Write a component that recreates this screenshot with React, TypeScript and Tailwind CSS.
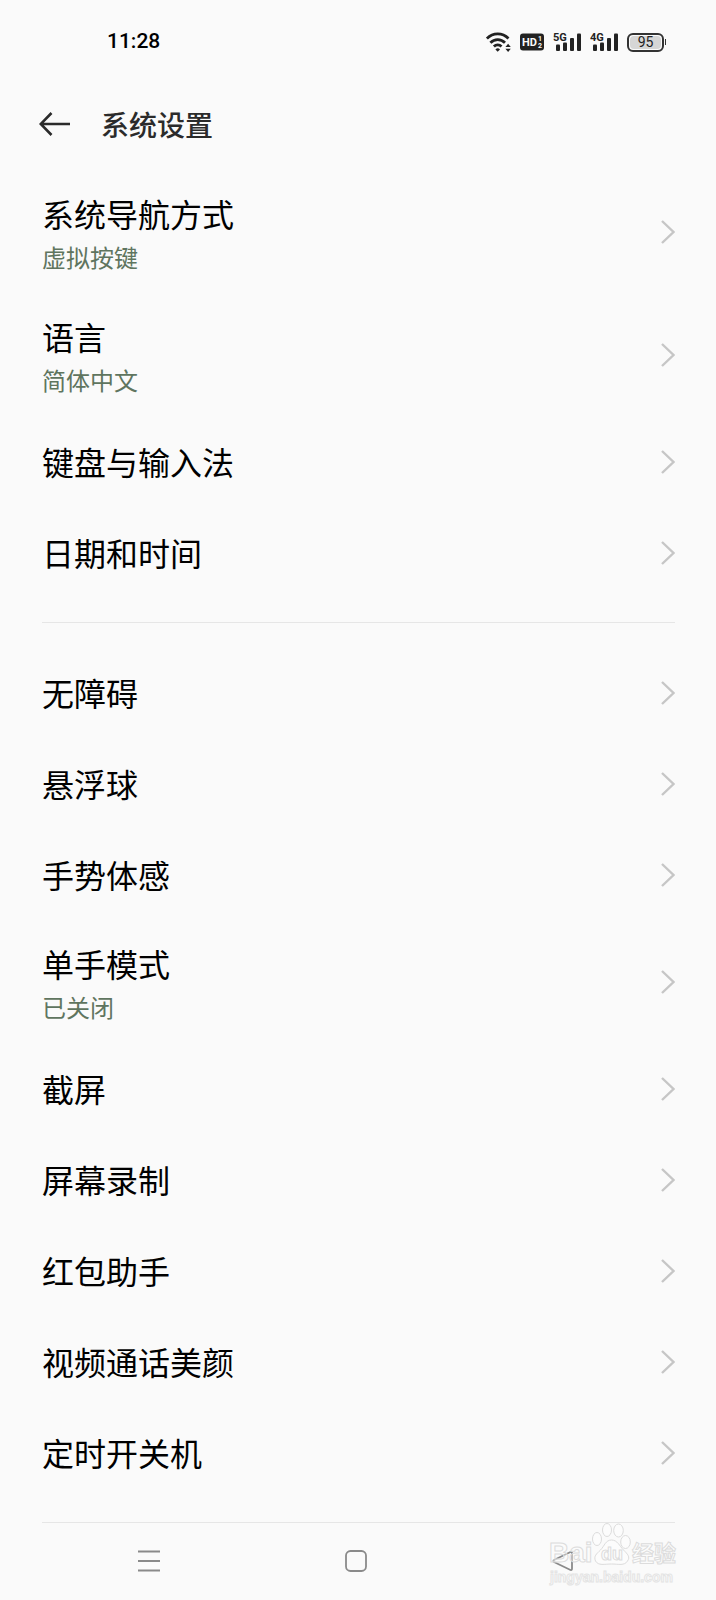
import type { ReactNode } from 'react';

type Item = {
  title: string;
  value?: string;
};

const GENERAL: Item[] = [
  { title: '系统导航方式', value: '虚拟按键' },
  { title: '语言', value: '简体中文' },
  { title: '键盘与输入法' },
  { title: '日期和时间' },
];

const FEATURES: Item[] = [
  { title: '无障碍' },
  { title: '悬浮球' },
  { title: '手势体感' },
  { title: '单手模式', value: '已关闭' },
  { title: '截屏' },
  { title: '屏幕录制' },
  { title: '红包助手' },
  { title: '视频通话美颜' },
  { title: '定时开关机' },
];

function WifiIcon() {
  return (
    <svg width="25" height="22" viewBox="0.8 0 25 22" fill="none" stroke="#222" strokeWidth="2.800">
      <path d="M1.700 7.600C7.800 1.400 17.200 1.400 23.300 7.600" />
      <path d="M5.200 11.700C9.400 7.500 15.600 7.500 19.800 11.700" />
      <path d="M8.700 15.500C10.900 13.300 14.100 13.300 16.300 15.500" />
      <path d="M12.500 20.800l-2.300-2.400a3.300 3.300 0 0 1 4.600 0z" fill="#222" stroke="none" />
      <path d="M20.200 16l2.700-3.200 2.700 3.200zM20.200 17.800l2.700 3.200 2.700-3.200z" fill="#222" stroke="none" />
    </svg>
  );
}

function HdIcon() {
  return (
    <svg width="24" height="18" viewBox="0 0 24 18" fontFamily="Roboto, sans-serif" fontWeight="700" fill="#fafafa">
      <rect x="0" y="0.5" width="24" height="17" rx="3" fill="#222" />
      <text x="2" y="13" fontSize="11">HD</text>
      <text x="18" y="8" fontSize="7">1</text>
      <text x="18" y="15" fontSize="7">2</text>
    </svg>
  );
}

function SignalIcon({ label }: { label: string }) {
  return (
    <svg width="28" height="20" viewBox="0 0 28 20" fill="#222">
      <text x="0" y="9" fontSize="11" fontWeight="700" fontFamily="Roboto, sans-serif">{label}</text>
      <rect x="3" y="12.500" width="4" height="6.500" rx="1" />
      <rect x="10" y="10.500" width="4" height="8.500" rx="1" />
      <rect x="17" y="6" width="4" height="13" rx="1" />
      <rect x="24" y="1.500" width="4" height="17.500" rx="1" />
    </svg>
  );
}

function Battery({ level }: { level: number }) {
  return (
    <div className="flex items-center gap-px">
      <div className="h-[19px] w-[37px] rounded-md border-2 border-[#333] p-px">
        <div className="flex h-full items-center justify-center rounded-sm bg-[#d6d6d6] text-sm leading-none text-[#222]">
          {level}
        </div>
      </div>
      <div className="h-1.5 w-px bg-[#333]" />
    </div>
  );
}

function StatusBar() {
  return (
    <div className="flex h-[84px] items-center justify-between pr-[50px] pl-[107px] font-['Roboto',sans-serif]">
      <span className="text-[21px] font-medium text-black">11:28</span>
      <div className="flex items-center gap-[9px]">
        <WifiIcon />
        <HdIcon />
        <SignalIcon label="5G" />
        <SignalIcon label="4G" />
        <Battery level={95} />
      </div>
    </div>
  );
}

function SettingRow({ title, value }: Item) {
  return (
    <li>
      <button
        type="button"
        className={`flex w-full items-center justify-between text-left ${value ? 'py-[18px]' : 'py-5'}`}
      >
        <span className="flex flex-col">
          <span className="text-[32px] leading-[51px] text-black">{title}</span>
          {value && <span className="text-2xl leading-9 text-[#5f755f]">{value}</span>}
        </span>
        <svg width="14" height="24" viewBox="0 0 14 24" fill="none" stroke="#c6c6c6" strokeWidth="2.400">
          <path d="M1 1l11.500 11L1 23" />
        </svg>
      </button>
    </li>
  );
}

function Group({ items }: { items: Item[] }) {
  return (
    <ul className="mr-[41px] mb-6 ml-[42px] border-b border-[#e6e6e6] pb-6">
      {items.map(item => (
        <SettingRow key={item.title} {...item} />
      ))}
    </ul>
  );
}

function NavButton({ label, children }: { label: string; children: ReactNode }) {
  return (
    <button type="button" aria-label={label} className="flex items-center justify-center">
      <svg width="22" height="22" viewBox="0 0 22 22" fill="none" stroke="#8a8a8a" strokeWidth="1.800">
        {children}
      </svg>
    </button>
  );
}

function Watermark() {
  return (
    <svg
      className="pointer-events-none absolute right-9 bottom-3 w-[132px]"
      viewBox="0 0 132 66"
      fill="#fff"
      fillOpacity="0.4"
      stroke="#dcdcdc"
      strokeWidth="1"
      fontWeight="700"
      fontFamily="'Liberation Sans', sans-serif"
    >
      <text x="1" y="40" fontSize="28">Bai</text>
      <ellipse cx="49" cy="17" rx="4.500" ry="6.500" />
      <ellipse cx="59" cy="8" rx="4.500" ry="6.500" />
      <ellipse cx="70.500" cy="8.500" rx="4.800" ry="6.500" />
      <ellipse cx="77.500" cy="20" rx="4.800" ry="6.500" />
      <path d="M63.500 18c6 0 8 6 12 10s7 7 4 11c-3 5-9 3-16 3s-13 2-16-3c-2-5 1-7 5-11s5-10 11-10z" />
      <text x="53" y="38" fontSize="18">du</text>
      <text x="84" y="39" fontSize="22" fontFamily="'Noto Sans CJK SC', sans-serif">经验</text>
      <text x="2" y="60" fontSize="14" stroke="#e4e4e4">jingyan.baidu.com</text>
    </svg>
  );
}

export default function App() {
  return (
    <div className="relative min-h-screen bg-[#fafafa] font-['Noto_Sans_CJK_SC',sans-serif]">
      <StatusBar />

      <header className="flex h-[86px] items-start gap-[30px] px-[39px] pt-5">
        <button type="button" aria-label="返回" className="flex h-10 items-center">
          <svg width="32" height="24" viewBox="0 0 32 24" fill="none" stroke="#2b2b2b" strokeWidth="2.600">
            <path d="M12.500 1L1.700 12l10.800 11M1.700 12H31" />
          </svg>
        </button>
        <h1 className="text-[28px] leading-10 font-medium text-[#2b2b2b]">系统设置</h1>
      </header>

      <main>
        <Group items={GENERAL} />
        <Group items={FEATURES} />
      </main>

      <nav className="-mt-6 grid h-[76px] grid-cols-3 pr-[50px] pl-[45px]">
        <NavButton label="最近任务">
          <path d="M0 1.500h22M0 11h22M0 20.500h22" />
        </NavButton>
        <NavButton label="主页">
          <rect x="1" y="1" width="20" height="20" rx="4.500" />
        </NavButton>
        <NavButton label="后退">
          <path d="M18.500 2L2 10q-1.500 1 0 2l16.500 8q1.500 .5 1.500-1.500v-15q0-2-1.500-1.500z" />
        </NavButton>
      </nav>

      <Watermark />
    </div>
  );
}
